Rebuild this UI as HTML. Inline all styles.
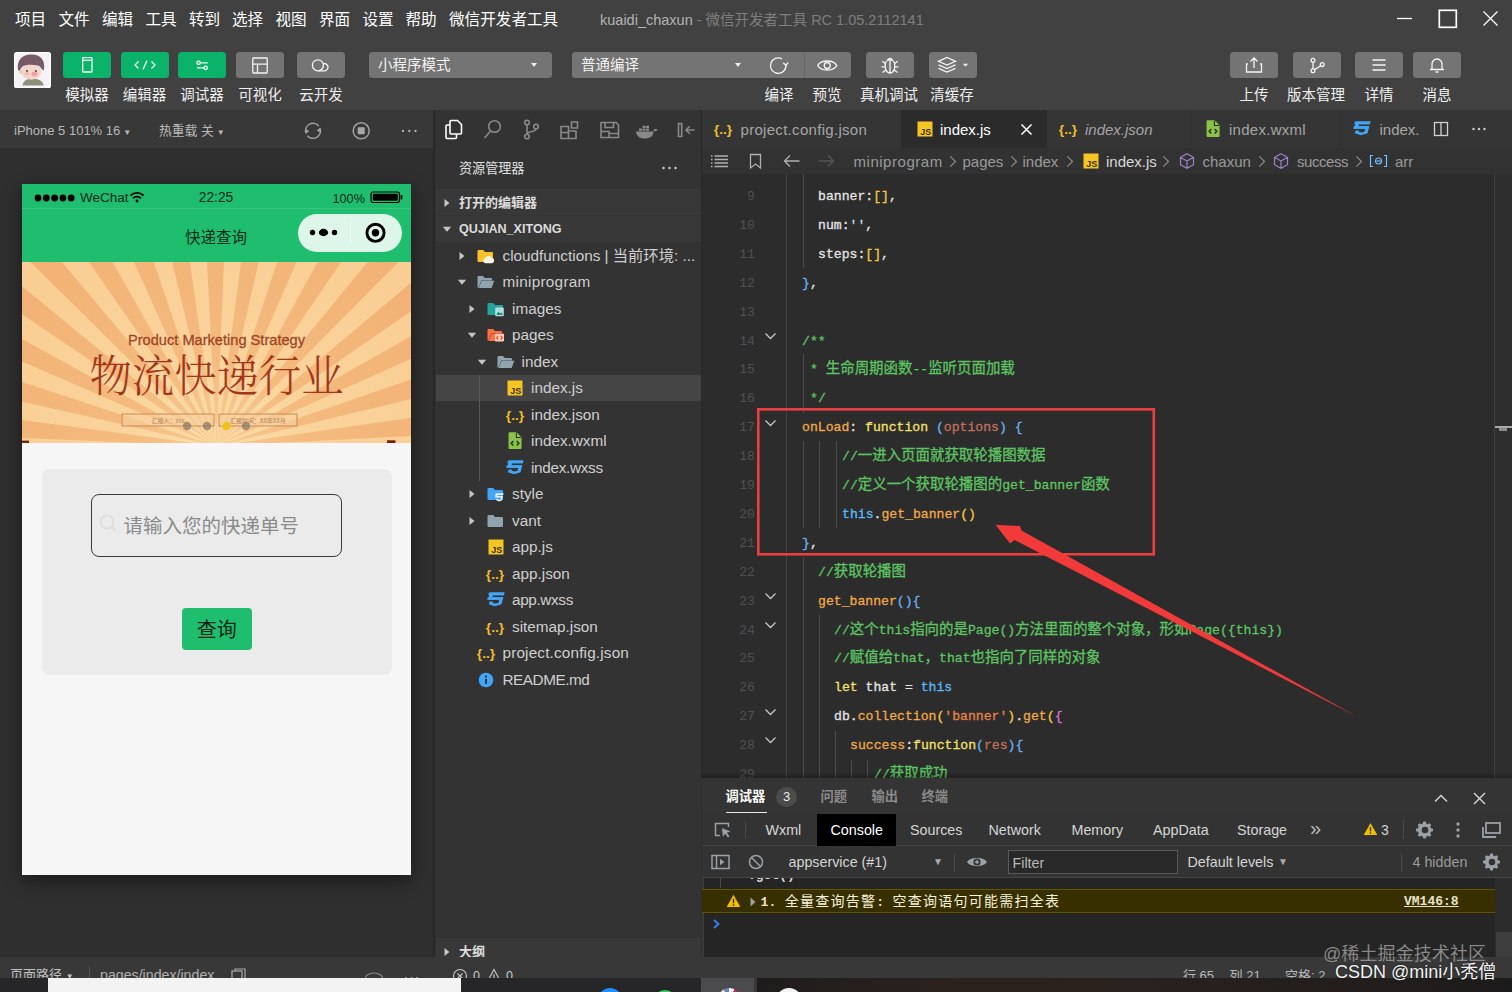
<!DOCTYPE html>
<html lang="zh">
<head>
<meta charset="utf-8">
<title>微信开发者工具</title>
<style>
*{box-sizing:border-box;margin:0;padding:0}
html,body{width:1512px;height:992px;overflow:hidden;background:#2e2e2e}
body{position:relative;font-family:"Liberation Sans","Noto Sans CJK SC",sans-serif;color:#e8e8e8;-webkit-font-smoothing:antialiased}
.abs{position:absolute}
/* ---------- title / menu ---------- */
#menubar{position:absolute;left:0;top:0;width:1512px;height:38px;background:#414141}
#menubar .mi{position:absolute;top:9.500px;font-size:15.600px;line-height:20px;color:#fff;white-space:nowrap}
#title{position:absolute;left:600px;top:10px;font-size:14.500px;line-height:20px;white-space:nowrap;color:#7e7e7e}
#title b{font-weight:normal;color:#b4b4b4}
/* ---------- toolbar ---------- */
#toolbar{position:absolute;left:0;top:38px;width:1512px;height:72px;background:#414141}
.tb{position:absolute;top:14px;height:26px;width:48px;border-radius:3.500px;background:#747474}.tb svg{opacity:.92}
.tb.g{background:#0bb36a}
.tl{position:absolute;top:46.800px;font-size:14.5px;line-height:20px;color:#f0f0f0;white-space:nowrap;text-align:center}
.sel{position:absolute;top:14px;height:26px;border-radius:3.500px;background:#747474;color:#f2f2f2;font-size:14.500px;line-height:27.500px;padding-left:9px}
/* ---------- simulator ---------- */
#sim{position:absolute;left:0;top:110px;width:433px;height:868px;background:#2f2f2f}
#simbar{position:absolute;left:0;top:0;width:433px;height:38px;background:#383838}
#divider1{position:absolute;left:433px;top:110px;width:2px;height:868px;background:#292929}
#phone{position:absolute;left:22px;top:73.5px;width:389px;height:691px;overflow:hidden;box-shadow:0 6px 18px rgba(0,0,0,.45)}
/* ---------- explorer ---------- */
#exp{position:absolute;left:436px;top:110px;width:265px;box-shadow:-1px 0 0 #313131;height:868px;background:#333333}
.sech{font-size:13px;line-height:20px;font-weight:bold;color:#dcdcdc;white-space:nowrap}
.trow{font-size:15.300px;line-height:22px;color:#cfcfcf;white-space:nowrap}
/* ---------- editor ---------- */
#ed{position:absolute;left:702px;top:110px;width:810px;height:668px;background:#2c2c2c;box-shadow:-1px 0 0 #282828}
.tabt{font-size:15px;line-height:22px;margin-top:1px;color:#a6a6a6;white-space:nowrap}
.bct{font-size:15px;line-height:22px;margin-top:1px;color:#9a9a9a;white-space:nowrap}
.ln{position:absolute;left:0;width:53px;text-align:right;font-family:"Liberation Mono","Noto Sans CJK SC",monospace;font-size:13.130px;line-height:29px;color:#505050}
.cl{position:absolute;font-family:"Liberation Mono","Noto Sans CJK SC",monospace;font-size:13.130px;line-height:29px;white-space:pre;color:#e6e6e6}
.cl{-webkit-text-stroke:.300px currentColor}.cl i{font-style:normal}.cl .k{font-weight:normal;font-size:14.450px}
.cl .w{color:#e4e4e4}.cl .y{color:#f5c842}.cl .b{color:#6ab0f3}.cl .c{color:#5dc462}.cl .o{color:#f0a848}.cl .f{color:#f3e16b}.cl .p{color:#c0705f}.cl .t{color:#5cb8f5}.cl .s{color:#cfd8e6}.cl .s2{color:#e8834a}.cl .m{color:#da70d6}
/* ---------- debugger ---------- */
#dbg{position:absolute;left:702px;top:778px;width:810px;height:180px;background:#343434}
.wk{font-size:14px;letter-spacing:1.250px;font-weight:normal;color:#f6f1dc}
/* ---------- status ---------- */
#status{position:absolute;left:0;top:957px;width:1512px;height:22px;background:#383838;overflow:hidden}
#taskbar{position:absolute;left:0;top:977.500px;width:1512px;height:14.500px;background:#262628;overflow:hidden}
</style>
</head>
<body>
<div id="menubar"><span class="mi" style="left:15px">项目</span><span class="mi" style="left:58.5px">文件</span><span class="mi" style="left:102px">编辑</span><span class="mi" style="left:145.5px">工具</span><span class="mi" style="left:189px">转到</span><span class="mi" style="left:232px">选择</span><span class="mi" style="left:275.5px">视图</span><span class="mi" style="left:319px">界面</span><span class="mi" style="left:362.5px">设置</span><span class="mi" style="left:405.5px">帮助</span><span class="mi" style="left:449px">微信开发者工具</span><div id="title"><b>kuaidi_chaxun</b> - 微信开发者工具 RC 1.05.2112141</div><svg class="abs" style="left:1390px;top:0" width="122" height="38" viewBox="0 0 122 38" fill="none" stroke="#fff" stroke-width="1.300">
<path d="M7 18.500H22"/><rect x="49.300" y="10.300" width="17" height="17" stroke-width="1.700"/><path d="M93.5 11.5L107.5 25.5M107.5 11.5L93.5 25.5"/></svg></div>
<div id="toolbar"><svg class="abs" style="left:14px;top:13.800px" width="37" height="36.500" viewBox="0 0 37 36.500"><defs><filter id="avb" x="-20%" y="-20%" width="140%" height="140%"><feGaussianBlur stdDeviation=".700"/></filter><clipPath id="avc"><rect width="37" height="36.500" rx="3.200"/></clipPath></defs><rect width="37" height="36.500" rx="3.200" fill="#f5f3f5"/><g clip-path="url(#avc)" filter="url(#avb)"><path d="M8.500 33.500C9 29 13 26.500 18.500 26.500S28.500 28.500 29.800 33.500Z" fill="#8f907a"/><ellipse cx="17.300" cy="19.500" rx="10.200" ry="8.200" fill="#f2d8cc"/><ellipse cx="6.800" cy="19.800" rx="1.600" ry="2.200" fill="#efc9a8"/><path d="M4 17.500C2.500 9 8 2.500 16.500 2.500C26 2 31.500 8 30 17.500C28.500 20 27.500 14.500 24 13.500C18 12 11 12.500 8.500 14.500C6.500 16 5.500 21 4 17.500Z" fill="#775a68"/><ellipse cx="12.800" cy="21.800" rx="2.600" ry="2" fill="#f3b4b4" opacity=".8"/><ellipse cx="20.500" cy="22" rx="3" ry="2.400" fill="#f29c9c" opacity=".9"/><circle cx="13" cy="19" r=".900" fill="#4a2c2c"/><circle cx="22" cy="19" r=".900" fill="#4a2c2c"/></g><rect x=".600" y=".600" width="35.800" height="35.300" rx="2.800" fill="none" stroke="#fff" stroke-width="1.200"/></svg><div class="tb g" style="left:63px"><svg width="48" height="26" viewBox="0 0 48 26" fill="none" stroke="#fff" stroke-width="1.3"><rect x="19.700" y="5.700" width="9.300" height="14.300" rx=".600"/><path d="M19.700 8.300H29"/></svg></div><div class="tb g" style="left:120.5px"><svg width="48" height="26" viewBox="0 0 48 26" fill="none" stroke="#fff" stroke-width="1.3"><path d="M17.5 9.5L14 13L17.5 16.5M30.5 9.5L34 13L30.5 16.5M26 8.5L22 17.5"/></svg></div><div class="tb g" style="left:178px"><svg width="48" height="26" viewBox="0 0 48 26" fill="none" stroke="#fff" stroke-width="1.3"><path d="M22.300 10.800H29.800M19 15.800H26"/><circle cx="20.600" cy="10.800" r="1.700"/><circle cx="27.700" cy="15.800" r="1.700"/></svg></div><div class="tb " style="left:236px"><svg width="48" height="26" viewBox="0 0 48 26" fill="none" stroke="#fff" stroke-width="1.3"><rect x="16.800" y="6" width="14.400" height="15" rx=".800"/><path d="M16.800 12.200H31.200M21.500 12.200V21"/></svg></div><div class="tb " style="left:297px"><svg width="48" height="26" viewBox="0 0 48 26" fill="none" stroke="#fff" stroke-width="1.3"><circle cx="20.900" cy="13.300" r="5.500"/><path d="M25.800 11.800a3.700 3.700 0 1 1 2.300 7H21"/></svg></div><div class="tl" style="left:47px;width:80px">模拟器</div><div class="tl" style="left:104.5px;width:80px">编辑器</div><div class="tl" style="left:162px;width:80px">调试器</div><div class="tl" style="left:220px;width:80px">可视化</div><div class="tl" style="left:281px;width:80px">云开发</div><div class="sel" style="left:369px;width:183px">小程序模式<i class="abs" style="right:15px;top:11px;border:3.5px solid transparent;border-top:4.5px solid #eee"></i></div><div class="sel" style="left:572px;width:183.500px;border-radius:3.500px 0 0 3.500px">普通编译<i class="abs" style="right:15px;top:11px;border:3.500px solid transparent;border-top:4.500px solid #eee"></i></div><div class="tb" style="left:756px;width:95px;border-radius:0 3.500px 3.500px 0"><svg class="abs" style="left:0" width="48" height="26" viewBox="0 0 48 26" fill="none" stroke="#fff" stroke-width="1.3"><path d="M26 6.900A7.700 7.700 0 1 0 29.900 13"/><path d="M27.200 10.800L29.900 13.300L32.200 10.500"/></svg><svg class="abs" style="left:48px" width="48" height="26" viewBox="0 0 48 26" fill="none" stroke="#fff" stroke-width="1.3"><path d="M13.700 13.500C17 7.500 29.500 7.500 32.800 13.500C29.500 19.500 17 19.500 13.700 13.500Z"/><circle cx="23.200" cy="13.500" r="3"/></svg><i class="abs" style="left:47.5px;top:0;width:1px;height:26px;background:#666"></i></div><div class="tb " style="left:866px"><svg width="48" height="26" viewBox="0 0 48 26" fill="none" stroke="#fff" stroke-width="1.3"><path d="M19.300 15a4.700 6 0 0 0 9.400 0V12.500a4.700 4.700 0 0 0-9.400 0ZM24 8V21M21.600 8.300a2.500 2.500 0 0 1 4.800 0M19.300 11.500L16.300 9.300M28.700 11.500L31.700 9.300M19.300 14.800H15.500M28.700 14.800H32.500M19.800 18L16.500 20.500M28.200 18L31.500 20.500"/></svg></div><div class="tb " style="left:928.5px"><svg width="48" height="26" viewBox="0 0 48 26" fill="none" stroke="#fff" stroke-width="1.3"><path d="M18 5.500L26.500 9.300L18 13.100L9.500 9.300ZM9.500 12.800L18 16.600L26.500 12.800M9.500 16.300L18 20.100L26.500 16.300"/><path d="M33.800 11.800H39.200L36.500 14.600Z" fill="#fff" stroke="none"/></svg></div><div class="tl" style="left:739px;width:80px">编译</div><div class="tl" style="left:787px;width:80px">预览</div><div class="tl" style="left:849px;width:80px">真机调试</div><div class="tl" style="left:912px;width:80px">清缓存</div><div class="tb " style="left:1230px"><svg width="48" height="26" viewBox="0 0 48 26" fill="none" stroke="#fff" stroke-width="1.3"><path d="M18 12H16.5V20H31.5V12H30M24 16V6M20.5 9.5L24 6L27.5 9.5"/></svg></div><div class="tb " style="left:1292.5px"><svg width="48" height="26" viewBox="0 0 48 26" fill="none" stroke="#fff" stroke-width="1.3"><circle cx="20" cy="8.300" r="1.900"/><circle cx="20" cy="18.800" r="1.900"/><circle cx="29.200" cy="12.600" r="1.900"/><path d="M20 10.200V16.900M21.500 17.600L27.700 13.700"/></svg></div><div class="tb " style="left:1355px"><svg width="48" height="26" viewBox="0 0 48 26" fill="none" stroke="#fff" stroke-width="1.3"><path d="M17.5 8H30.5M17.5 13H30.5M17.5 18H30.5" stroke-width="1.6"/></svg></div><div class="tb " style="left:1412.5px"><svg width="48" height="26" viewBox="0 0 48 26" fill="none" stroke="#fff" stroke-width="1.3"><path d="M19 17.5V12a5 5 0 0 1 10 0V17.5M17 17.5H31M22.5 20H25.5"/></svg></div><div class="tl" style="left:1214px;width:80px">上传</div><div class="tl" style="left:1276px;width:80px">版本管理</div><div class="tl" style="left:1339px;width:80px">详情</div><div class="tl" style="left:1397px;width:80px">消息</div></div>
<div id="sim"><div id="simbar"><span class="abs" style="left:14px;top:11px;font-size:13px;line-height:20px;color:#b8b8b8;white-space:nowrap">iPhone 5 101% 16<i style="font-style:normal;font-size:8px;margin-left:3px">▼</i></span><span class="abs" style="left:159px;top:11px;font-size:12.800px;line-height:20px;color:#b8b8b8;white-space:nowrap">热重载 关<i style="font-style:normal;font-size:8px;margin-left:3px">▼</i></span><svg class="abs" style="left:303px;top:10px" width="120" height="22" viewBox="0 0 120 22" fill="none" stroke="#a2a2a2" stroke-width="1.400"><path d="M3 13.500A7.500 7.500 0 0 1 15.800 6M17 8.100A7.500 7.500 0 0 1 4.200 15.600"/><path d="M3.200 9.200L3 13.500L6.300 11.200Z M16.800 12.400L17 8.100L13.700 10.400Z" fill="#a2a2a2" stroke="none"/><circle cx="58.200" cy="10.800" r="8" stroke-width="1.500"/><rect x="54.700" y="7.300" width="7" height="7" rx=".800" fill="#a8a8a8" stroke="none"/><g fill="#b4b4b4" stroke="none"><circle cx="100" cy="11" r="1.150"/><circle cx="106.300" cy="11" r="1.150"/><circle cx="112.500" cy="11" r="1.150"/></g></svg></div><div id="phone">
<div class="abs" style="left:0;top:0;width:389px;height:78px;background:#1ebe6e"></div>
<div class="abs" style="left:0;top:24.5px;width:389px;height:1px;background:rgba(255,255,255,.13)"></div>
<svg class="abs" style="left:11px;top:9px" width="46" height="10" viewBox="0 0 46 10"><circle cx="5" cy="5" r="3.4"/><circle cx="13.3" cy="5" r="3.4"/><circle cx="21.6" cy="5" r="3.4"/><circle cx="29.9" cy="5" r="3.4"/><circle cx="38.2" cy="5" r="3.4"/></svg>
<span class="abs" style="left:58px;top:5.500px;font-size:13.500px;line-height:18px;color:#0a2a18">WeChat</span>
<svg class="abs" style="left:107px;top:7px" width="16" height="12" viewBox="0 0 16 12" fill="none" stroke="#000" stroke-width="1.8"><path d="M1.5 4.5a9.5 9.5 0 0 1 13 0M4 7.3a5.8 5.8 0 0 1 8 0"/><circle cx="8" cy="10" r="1.4" fill="#000" stroke="none"/></svg>
<span class="abs" style="left:154px;width:80px;text-align:center;top:5.500px;font-size:13.800px;line-height:18px;color:#0a2a18">22:25</span>
<span class="abs" style="left:310.500px;top:6px;font-size:12.700px;line-height:18px;color:#0a2a18">100%</span>
<svg class="abs" style="left:348px;top:7px" width="34" height="13" viewBox="0 0 34 13"><rect x="1" y="1" width="28.5" height="10.5" rx="2.2" fill="none" stroke="#000" stroke-width="1.2"/><rect x="2.8" y="2.8" width="25" height="7" rx="1" fill="#000"/><rect x="30.6" y="4" width="1.8" height="4.5" rx=".8" fill="#000"/></svg>
<span class="abs" style="left:134px;width:120px;text-align:center;top:43px;font-size:15.5px;line-height:22px;color:#0c2c1a">快递查询</span>
<div class="abs" style="left:276px;top:30px;width:104px;height:38px;border-radius:19px;background:#def6ea"></div>
<div class="abs" style="left:327.5px;top:38px;width:1px;height:22px;background:#f4fbf7"></div>
<svg class="abs" style="left:276px;top:30px" width="104" height="38" viewBox="0 0 104 38"><circle cx="14.500" cy="18.500" r="2.700"/><ellipse cx="25.500" cy="18.500" rx="4.600" ry="3.700"/><circle cx="36.500" cy="18.500" r="2.700"/><circle cx="77.500" cy="18.800" r="8.600" fill="none" stroke="#000" stroke-width="2.900"/><circle cx="77.500" cy="18.800" r="3.700"/></svg>
<svg class="abs" style="left:0;top:78px" width="389" height="181" viewBox="0 0 389 181"><defs><radialGradient id="rg" cx="194.5" cy="182" r="260" gradientUnits="userSpaceOnUse"><stop offset="0" stop-color="#fbdcaa"/><stop offset=".4" stop-color="#fad39b"/><stop offset="1" stop-color="#f9cd93"/></radialGradient><radialGradient id="rg2" cx="194.5" cy="182" r="260" gradientUnits="userSpaceOnUse"><stop offset="0" stop-color="#f8cc94"/><stop offset=".35" stop-color="#f4ba7e"/><stop offset="1" stop-color="#f2b174"/></radialGradient></defs><rect width="389" height="181" fill="url(#rg)"/><g fill="url(#rg2)"><path d="M194.5 184L-300.3 255.8L-304.8 209.9Z"/><path d="M194.5 184L-305.1 163.7L-301.1 117.7Z"/><path d="M194.5 184L-292.8 72.2L-280.5 27.7Z"/><path d="M194.5 184L-264.0 -15.4L-243.7 -56.9Z"/><path d="M194.5 184L-219.6 -96.3L-191.9 -133.3Z"/><path d="M194.5 184L-161.0 -167.6L-127.1 -198.9Z"/><path d="M194.5 184L-90.4 -226.9L-51.2 -251.5Z"/><path d="M194.5 184L-10.0 -272.3L33.0 -289.2Z"/><path d="M194.5 184L77.3 -302.1L122.7 -310.8Z"/><path d="M194.5 184L168.6 -315.3L214.8 -315.6Z"/><path d="M194.5 184L260.8 -311.6L306.3 -303.3Z"/><path d="M194.5 184L350.8 -291.0L393.9 -274.5Z"/><path d="M194.5 184L435.4 -254.2L474.8 -230.1Z"/><path d="M194.5 184L511.8 -202.4L546.1 -171.5Z"/><path d="M194.5 184L577.4 -137.6L605.4 -100.9Z"/><path d="M194.5 184L630.0 -61.7L650.8 -20.5Z"/><path d="M194.5 184L667.7 22.5L680.6 66.8Z"/><path d="M194.5 184L689.3 112.2L693.8 158.1Z"/><path d="M194.5 184L694.1 204.3L690.1 250.3Z"/></g>
<rect x="0" y="178.600" width="7" height="2.400" fill="#7a1f0a"/><rect x="365" y="178.300" width="8.500" height="2.700" fill="#7a1f0a"/>
<rect x="100" y="152" width="92" height="12" fill="#f6cf9c" fill-opacity=".6" stroke="#c98a55" stroke-width="1"/><rect x="197" y="152" width="78" height="12" fill="#f6cf9c" fill-opacity=".6" stroke="#c98a55" stroke-width="1"/>
<text x="146" y="161.300" text-anchor="middle" font-family="Noto Sans CJK SC, sans-serif" font-size="6" fill="#b9825a">汇报人：xxx</text><text x="236" y="161.300" text-anchor="middle" font-family="Noto Sans CJK SC, sans-serif" font-size="6" fill="#b9825a">汇报时间：XX年XX月</text><text x="194.5" y="83" text-anchor="middle" font-family="Liberation Sans, sans-serif" font-size="15.500" fill="#9f4526" stroke="#9f4526" stroke-width=".300" textLength="177" lengthAdjust="spacingAndGlyphs">Product Marketing Strategy</text>
<text x="194.5" y="130" text-anchor="middle" font-family="Noto Serif CJK SC, serif" font-weight="300" font-size="44" fill="#a2361a" textLength="254" lengthAdjust="spacingAndGlyphs">物流快递行业</text>
<g fill="#8a7a62" fill-opacity=".75"><circle cx="165" cy="164" r="4.2"/><circle cx="185" cy="164" r="4.2"/><circle cx="224" cy="164" r="4.2"/></g><circle cx="204.5" cy="164" r="4.2" fill="#f3c21a"/>
</svg>
<div class="abs" style="left:0;top:259px;width:389px;height:432px;background:#f6f6f6"></div>
<div class="abs" style="left:20px;top:285px;width:350px;height:206px;border-radius:8px;background:#ebebeb"></div>
<div class="abs" style="left:69px;top:310px;width:251px;height:63px;border-radius:8px;border:1.5px solid #3a3a3a"></div>
<svg class="abs" style="left:75px;top:328px" width="24" height="24" viewBox="0 0 24 24" fill="none" stroke="#dcdcdc" stroke-width="1.6"><circle cx="10" cy="10" r="6.5"/><path d="M15 15L19 19"/></svg>
<span class="abs" style="left:101.5px;top:328px;font-size:19.5px;line-height:28px;color:#8a8a8a;white-space:nowrap">请输入您的快递单号</span>
<div class="abs" style="left:160px;top:424.200px;width:69.500px;height:42px;border-radius:4px;background:#1ebe6e;color:#0c2416;font-size:20px;line-height:45px;text-align:center">查询</div>
</div></div>
<div id="divider1"></div>
<div id="exp"><svg class="abs" style="left:0;top:4px" width="265" height="32" viewBox="0 0 265 32" fill="none" stroke="#898989" stroke-width="1.600">
<g stroke="#ffffff" stroke-width="1.600"><path d="M14 7.500a1 1 0 0 1 1-1H21.500L25.500 10.500V19a1 1 0 0 1-1 1H15a1 1 0 0 1-1-1Z"/><path d="M14 11H11a1 1 0 0 0-1 1V23.500a1 1 0 0 0 1 1H19.500a1 1 0 0 0 1-1V20"/></g>
<circle cx="58.500" cy="12.500" r="5.800"/><path d="M54.500 17L48.500 24"/>
<circle cx="91" cy="8.500" r="2.300"/><circle cx="91" cy="22.500" r="2.300"/><circle cx="100" cy="12.500" r="2.300"/><path d="M91 10.800V20.200M100 14.800C100 18.500 91 17 91 20.200"/>
<path d="M125 12.500H132.500V24.500H125ZM132.500 17H140V24.500H132.500M125 18.500H132.500M135.500 8H141.500V14H135.500Z"/>
<path d="M165 8.500H180L182.500 11V23.500H165ZM169 8.500V13.500H177.500V8.500M165 17.500H173V23.500M173 19.500H182.500"/>
<path d="M200 17.500H217.500C217.500 22 214 24.500 208.500 24.500C203.500 24.500 200.500 22 200 17.500ZM217.500 17.500C220 17.500 221 16.500 221.500 15.500C220.500 14.800 219 15 218 15.500" fill="#898989" stroke="none"/><path d="M203 16.800V14.500H206V16.800M206.500 16.800V14.500H209.500V16.800M210 16.800V14.500H213V16.800M206.500 14V11.700H209.500V14M210 14V11.700H213V14" fill="#898989" stroke="none"/>
<path d="M242.500 9.500H245.700V22.500H242.500ZM258.500 16H250M253.800 12.200L250 16L253.800 19.800"/>
</svg><span class="abs" style="left:23px;top:49px;font-size:13.100px;line-height:20px;color:#e0e0e0;white-space:nowrap">资源管理器</span><svg class="abs" style="left:224px;top:54px" width="20" height="8" viewBox="0 0 20 8" fill="#ccc"><circle cx="3.500" cy="4" r="1.200"/><circle cx="9.500" cy="4" r="1.200"/><circle cx="15.500" cy="4" r="1.200"/></svg><div class="abs" style="left:0;top:78.500px;width:265px;height:53.500px;background:#383838"></div><div class="abs" style="left:0;top:105px;width:265px;height:1px;background:#353535"></div><svg class="abs" style="left:6px;top:87.5px" width="10" height="10" viewBox="0 0 10 10"><path d="M2.5 1L7.5 5L2.5 9Z" fill="#c5c5c5"/></svg><span class="abs sech" style="left:23px;top:82.500px">打开的编辑器</span><svg class="abs" style="left:6px;top:114px" width="10" height="10" viewBox="0 0 10 10"><path d="M0.800 2.800H9.200L5 7.800Z" fill="#c5c5c5"/></svg><span class="abs sech" style="left:23px;top:109px;font-size:12.600px">QUJIAN_XITONG</span><svg class="abs" style="left:21px;top:140.5px" width="10" height="10" viewBox="0 0 10 10"><path d="M2.5 1L7.5 5L2.5 9Z" fill="#c5c5c5"/></svg><div class="abs" style="left:40px;top:136.5px;width:20px;height:18px"><svg width="19" height="18" viewBox="0 0 19 18"><path d="M1.5 4a1 1 0 0 1 1-1H7.2l1.8 2H16a1 1 0 0 1 1 1V14a1 1 0 0 1-1 1H2.5a1 1 0 0 1-1-1Z" fill="#fbc02d"/><path d="M9.2 16.2a2.6 2.6 0 0 1 .3-5.1 3.3 3.3 0 0 1 6.200-.4 2.800 2.800 0 0 1 .3 5.500Z" fill="#fff7e0"/></svg></div><span class="abs trow" style="left:66.5px;top:134.5px">cloudfunctions | 当前环境: ...</span><svg class="abs" style="left:21px;top:167.0px" width="10" height="10" viewBox="0 0 10 10"><path d="M0.800 2.800H9.200L5 7.800Z" fill="#c5c5c5"/></svg><div class="abs" style="left:40px;top:163.0px;width:20px;height:18px"><svg width="19" height="18" viewBox="0 0 19 18"><path d="M1.5 14.5V4a1 1 0 0 1 1-1H7l1.8 2H15a1 1 0 0 1 1 1v1.5H5.2L2.6 14.5Z" fill="#90a4ae"/><path d="M2.6 15L5.6 7.8H18.4L15.6 15Z" fill="#90a4ae"/></svg></div><span class="abs trow" style="left:66.5px;top:161.0px;letter-spacing:.280px">miniprogram</span><svg class="abs" style="left:31px;top:193.5px" width="10" height="10" viewBox="0 0 10 10"><path d="M2.5 1L7.5 5L2.5 9Z" fill="#c5c5c5"/></svg><div class="abs" style="left:50px;top:189.5px;width:20px;height:18px"><svg width="19" height="18" viewBox="0 0 19 18"><path d="M1.5 4a1 1 0 0 1 1-1H7.2l1.8 2H16a1 1 0 0 1 1 1V14a1 1 0 0 1-1 1H2.5a1 1 0 0 1-1-1Z" fill="#26a69a"/><rect x="9.2" y="7.6" width="8.6" height="8.6" rx="1" fill="#b2dfdb"/><path d="M10.300 14.800l2.200-3 1.600 2 1.100-1.300 1.700 2.300Z" fill="#00796b"/></svg></div><span class="abs trow" style="left:76px;top:187.5px">images</span><svg class="abs" style="left:31px;top:220.0px" width="10" height="10" viewBox="0 0 10 10"><path d="M0.800 2.800H9.200L5 7.800Z" fill="#c5c5c5"/></svg><div class="abs" style="left:50px;top:216.0px;width:20px;height:18px"><svg width="19" height="18" viewBox="0 0 19 18"><path d="M1.5 14.5V4a1 1 0 0 1 1-1H7l1.8 2H15a1 1 0 0 1 1 1v1.5H5.2L2.6 14.5Z" fill="#ff7043"/><path d="M2.6 15L5.6 7.8H18.4L15.6 15Z" fill="#ff7043"/><rect x="9" y="7.800" width="9" height="7.800" rx="1" fill="#ffccbc"/><path d="M12.200 9.800L10.600 11.700L12.200 13.600M14.800 9.800L16.400 11.700L14.800 13.600" fill="none" stroke="#e64a19" stroke-width="1.100"/></svg></div><span class="abs trow" style="left:76px;top:214.0px">pages</span><svg class="abs" style="left:40.5px;top:246.5px" width="10" height="10" viewBox="0 0 10 10"><path d="M0.800 2.800H9.200L5 7.800Z" fill="#c5c5c5"/></svg><div class="abs" style="left:60px;top:242.5px;width:20px;height:18px"><svg width="19" height="18" viewBox="0 0 19 18"><path d="M1.5 14.5V4a1 1 0 0 1 1-1H7l1.8 2H15a1 1 0 0 1 1 1v1.5H5.2L2.6 14.5Z" fill="#90a4ae"/><path d="M2.6 15L5.6 7.8H18.4L15.6 15Z" fill="#90a4ae"/></svg></div><span class="abs trow" style="left:85.5px;top:240.5px">index</span><div class="abs" style="left:0;top:264.75px;width:265px;height:26.500px;background:#454545"></div><div class="abs" style="left:69.5px;top:269.0px;width:20px;height:18px"><svg width="18" height="18" viewBox="0 0 18 18"><rect x="1.5" y="1.5" width="15" height="15" fill="#f5c623"/><text x="15.2" y="14.6" text-anchor="end" font-family="Liberation Sans, sans-serif" font-weight="bold" font-size="9" fill="#3a3000">JS</text></svg></div><span class="abs trow" style="left:95px;top:267.0px">index.js</span><div class="abs" style="left:68.5px;top:295.5px;width:20px;height:18px"><svg width="20" height="18" viewBox="0 0 20 18"><text x="10" y="13.5" text-anchor="middle" font-family="Liberation Sans, sans-serif" font-weight="bold" font-size="13.5" fill="#f2bd2c" textLength="18.5" lengthAdjust="spacingAndGlyphs">{..}</text></svg></div><span class="abs trow" style="left:95px;top:293.5px">index.json</span><div class="abs" style="left:69.5px;top:322.0px;width:20px;height:18px"><svg width="18" height="18" viewBox="1.300 1.200 15.600 15.600"><path d="M3.5 2.5a1 1 0 0 1 1-1H10.5L14.8 5.8V15a1 1 0 0 1-1 1H4.5a1 1 0 0 1-1-1Z" fill="#8bc34a"/><path d="M10.3 1.7V6H14.6" fill="none" stroke="#2b2b2b" stroke-width=".9"/><path d="M7.6 9L5.8 10.9L7.6 12.8M10.6 9L12.4 10.9L10.6 12.8" fill="none" stroke="#22380f" stroke-width="1.3"/></svg></div><span class="abs trow" style="left:95px;top:320.0px">index.wxml</span><div class="abs" style="left:69.5px;top:348.5px;width:20px;height:18px"><svg width="18" height="18" viewBox="2.800 .800 13.600 17.300" preserveAspectRatio="none"><path d="M4.3 2.2H16l-.5 2.6H7.3l-.3 1.9h8.1l-1.3 6.9-5 1.9-4.6-1.9.5-2.7h2.6l-.2 1.1 2.1.8 2.3-.8.5-2.8H3.7l.9-4.7h8.200" fill="#42a5f5"/><path d="M4.3 2.2H16l-.5 2.6H3.8Z M3.4 6.7H15.1L14.6 9.3H2.9Z" fill="#42a5f5"/></svg></div><span class="abs trow" style="left:95px;top:346.5px;letter-spacing:-.300px">index.wxss</span><svg class="abs" style="left:31px;top:379.0px" width="10" height="10" viewBox="0 0 10 10"><path d="M2.5 1L7.5 5L2.5 9Z" fill="#c5c5c5"/></svg><div class="abs" style="left:50px;top:375.0px;width:20px;height:18px"><svg width="19" height="18" viewBox="0 0 19 18"><path d="M1.5 4a1 1 0 0 1 1-1H7.2l1.8 2H16a1 1 0 0 1 1 1V14a1 1 0 0 1-1 1H2.5a1 1 0 0 1-1-1Z" fill="#42a5f5"/><path d="M9.6 8.200H17.600L17.300 9.900H11.600L11.400 11H17L16.100 15.300L13.200 16.500L10.200 15.300L10.500 13.800H12L11.900 14.400L13.200 14.900L14.700 14.400L15 12.600H9Z" fill="#e3f2fd"/></svg></div><span class="abs trow" style="left:76px;top:373.0px">style</span><svg class="abs" style="left:31px;top:405.5px" width="10" height="10" viewBox="0 0 10 10"><path d="M2.5 1L7.5 5L2.5 9Z" fill="#c5c5c5"/></svg><div class="abs" style="left:50px;top:401.5px;width:20px;height:18px"><svg width="19" height="18" viewBox="0 0 19 18"><path d="M1.5 4a1 1 0 0 1 1-1H7.2l1.8 2H16a1 1 0 0 1 1 1V14a1 1 0 0 1-1 1H2.5a1 1 0 0 1-1-1Z" fill="#90a4ae"/></svg></div><span class="abs trow" style="left:76px;top:399.5px">vant</span><div class="abs" style="left:50.5px;top:428.0px;width:20px;height:18px"><svg width="18" height="18" viewBox="0 0 18 18"><rect x="1.5" y="1.5" width="15" height="15" fill="#f5c623"/><text x="15.2" y="14.6" text-anchor="end" font-family="Liberation Sans, sans-serif" font-weight="bold" font-size="9" fill="#3a3000">JS</text></svg></div><span class="abs trow" style="left:76px;top:426.0px">app.js</span><div class="abs" style="left:49px;top:454.5px;width:20px;height:18px"><svg width="20" height="18" viewBox="0 0 20 18"><text x="10" y="13.5" text-anchor="middle" font-family="Liberation Sans, sans-serif" font-weight="bold" font-size="13.5" fill="#f2bd2c" textLength="18.5" lengthAdjust="spacingAndGlyphs">{..}</text></svg></div><span class="abs trow" style="left:76px;top:452.5px">app.json</span><div class="abs" style="left:50.5px;top:481.0px;width:20px;height:18px"><svg width="18" height="18" viewBox="2.800 .800 13.600 17.300" preserveAspectRatio="none"><path d="M4.3 2.2H16l-.5 2.6H7.3l-.3 1.9h8.1l-1.3 6.9-5 1.9-4.6-1.9.5-2.7h2.6l-.2 1.1 2.1.8 2.3-.8.5-2.8H3.7l.9-4.7h8.200" fill="#42a5f5"/><path d="M4.3 2.2H16l-.5 2.6H3.8Z M3.4 6.7H15.1L14.6 9.3H2.9Z" fill="#42a5f5"/></svg></div><span class="abs trow" style="left:76px;top:479.0px;letter-spacing:-.350px">app.wxss</span><div class="abs" style="left:49px;top:507.5px;width:20px;height:18px"><svg width="20" height="18" viewBox="0 0 20 18"><text x="10" y="13.5" text-anchor="middle" font-family="Liberation Sans, sans-serif" font-weight="bold" font-size="13.5" fill="#f2bd2c" textLength="18.5" lengthAdjust="spacingAndGlyphs">{..}</text></svg></div><span class="abs trow" style="left:76px;top:505.5px">sitemap.json</span><div class="abs" style="left:39.5px;top:534.0px;width:20px;height:18px"><svg width="20" height="18" viewBox="0 0 20 18"><text x="10" y="13.5" text-anchor="middle" font-family="Liberation Sans, sans-serif" font-weight="bold" font-size="13.5" fill="#f2bd2c" textLength="18.5" lengthAdjust="spacingAndGlyphs">{..}</text></svg></div><span class="abs trow" style="left:66.5px;top:532.0px;letter-spacing:.170px">project.config.json</span><div class="abs" style="left:40.5px;top:560.5px;width:20px;height:18px"><svg width="18" height="18" viewBox="0 0 18 18"><circle cx="9" cy="9" r="7.3" fill="#42a5f5"/><rect x="8.1" y="7.8" width="1.8" height="5" fill="#1e2a35"/><circle cx="9" cy="5.6" r="1.1" fill="#1e2a35"/></svg></div><span class="abs trow" style="left:66.5px;top:558.5px;letter-spacing:-.450px">README.md</span><div class="abs" style="left:42.5px;top:265px;width:1px;height:106px;background:#585858"></div><div class="abs" style="left:0;top:828px;width:265px;height:40px;background:#383838"></div><svg class="abs" style="left:6px;top:836.5px" width="10" height="10" viewBox="0 0 10 10"><path d="M2.5 1L7.5 5L2.5 9Z" fill="#c5c5c5"/></svg><span class="abs sech" style="left:23px;top:831.5px">大纲</span></div>
<div id="ed"><div class="abs" style="left:0;top:0;width:810px;height:37.500px;background:#353535"></div><div class="abs" style="left:199px;top:0;width:145.500px;height:37.500px;background:#2b2b2b"></div><div class="abs" style="left:487.5px;top:0;width:1px;height:37.500px;background:#2f2f2f"></div><div class="abs" style="left:637.5px;top:0;width:1px;height:37.500px;background:#2f2f2f"></div><div class="abs" style="left:11px;top:10px;width:20px;height:18px"><svg width="20" height="18" viewBox="0 0 20 18"><text x="10" y="13.5" text-anchor="middle" font-family="Liberation Sans, sans-serif" font-weight="bold" font-size="13.5" fill="#f2bd2c" textLength="18.5" lengthAdjust="spacingAndGlyphs">{..}</text></svg></div><span class="abs tabt" style="left:38.5px;top:8px;letter-spacing:.300px">project.config.json</span><div class="abs" style="left:213.5px;top:10px;width:20px;height:18px"><svg width="18" height="18" viewBox="0 0 18 18"><rect x="1.5" y="1.5" width="15" height="15" fill="#f5c623"/><text x="15.2" y="14.6" text-anchor="end" font-family="Liberation Sans, sans-serif" font-weight="bold" font-size="9" fill="#3a3000">JS</text></svg></div><span class="abs tabt" style="left:238px;top:8px;color:#fff">index.js</span><svg class="abs" style="left:317.5px;top:12.5px" width="13" height="13" viewBox="0 0 13 13" stroke="#fff" stroke-width="1.500" fill="none"><path d="M1.500 1.500L11.500 11.500M11.500 1.500L1.500 11.500"/></svg><div class="abs" style="left:356px;top:10px;width:20px;height:18px"><svg width="20" height="18" viewBox="0 0 20 18"><text x="10" y="13.5" text-anchor="middle" font-family="Liberation Sans, sans-serif" font-weight="bold" font-size="13.5" fill="#f2bd2c" textLength="18.5" lengthAdjust="spacingAndGlyphs">{..}</text></svg></div><span class="abs tabt" style="left:383px;top:8px;font-style:italic">index.json</span><div class="abs" style="left:501.5px;top:10px;width:20px;height:18px"><svg width="18" height="18" viewBox="1.300 1.200 15.600 15.600"><path d="M3.5 2.5a1 1 0 0 1 1-1H10.5L14.8 5.8V15a1 1 0 0 1-1 1H4.5a1 1 0 0 1-1-1Z" fill="#8bc34a"/><path d="M10.3 1.7V6H14.6" fill="none" stroke="#2b2b2b" stroke-width=".9"/><path d="M7.6 9L5.8 10.9L7.6 12.8M10.6 9L12.4 10.9L10.6 12.8" fill="none" stroke="#22380f" stroke-width="1.3"/></svg></div><span class="abs tabt" style="left:527px;top:8px;letter-spacing:.270px">index.wxml</span><div class="abs" style="left:650.5px;top:10px;width:20px;height:18px"><svg width="18" height="18" viewBox="2.800 .800 13.600 17.300" preserveAspectRatio="none"><path d="M4.3 2.2H16l-.5 2.6H7.3l-.3 1.9h8.1l-1.3 6.9-5 1.9-4.6-1.9.5-2.7h2.6l-.2 1.1 2.1.8 2.3-.8.5-2.8H3.7l.9-4.7h8.200" fill="#42a5f5"/><path d="M4.3 2.2H16l-.5 2.6H3.8Z M3.4 6.7H15.1L14.600 9.300H2.900Z" fill="#42a5f5"/></svg></div><span class="abs tabt" style="left:677.5px;top:8px;">index.</span><svg class="abs" style="left:731px;top:11px" width="60" height="16" viewBox="0 0 60 16" fill="none" stroke="#d0d0d0" stroke-width="1.300"><rect x="1.500" y="1.500" width="13" height="13"/><path d="M8 1.500V14.500"/><g fill="#d0d0d0" stroke="none"><circle cx="40.500" cy="8" r="1.200"/><circle cx="46" cy="8" r="1.200"/><circle cx="51.500" cy="8" r="1.200"/></g></svg><div class="abs" style="left:0;top:37.500px;width:810px;height:26.500px;background:#323232"></div><svg class="abs" style="left:6px;top:41px" width="130" height="20" viewBox="0 0 130 20" fill="none" stroke="#b0b0b0" stroke-width="1.300">
<path d="M6.500 5H20M6.500 8.500H20M6.500 12H20M6.500 15.500H20M3 5H4.500M3 8.500H4.500M3 12H4.500M3 15.500H4.500"/>
<path d="M42.500 3.500H52.500V17L47.500 13L42.500 17Z"/>
<path d="M91.500 10H76.500M82 4.500L76.500 10L82 15.500"/>
<path d="M110.500 10H125.500M120 4.500L125.500 10L120 15.500" stroke="#555"/></svg><span class="abs bct" style="left:151.5px;top:40px;letter-spacing:.530px">miniprogram</span><svg class="abs" style="left:247.4px;top:45px" width="8" height="13" viewBox="0 0 8 13" fill="none" stroke="#8c8c8c" stroke-width="1.200"><path d="M1.300 1.300L6.500 6.500L1.300 11.700"/></svg><span class="abs bct" style="left:260.5px;top:40px;">pages</span><svg class="abs" style="left:307.7px;top:45px" width="8" height="13" viewBox="0 0 8 13" fill="none" stroke="#8c8c8c" stroke-width="1.200"><path d="M1.300 1.300L6.500 6.500L1.300 11.700"/></svg><span class="abs bct" style="left:320.5px;top:40px;">index</span><svg class="abs" style="left:364.0px;top:45px" width="8" height="13" viewBox="0 0 8 13" fill="none" stroke="#8c8c8c" stroke-width="1.200"><path d="M1.300 1.300L6.500 6.500L1.300 11.700"/></svg><div class="abs" style="left:379.5px;top:42px;width:20px;height:18px"><svg width="18" height="18" viewBox="0 0 18 18"><rect x="1.5" y="1.5" width="15" height="15" fill="#f5c623"/><text x="15.2" y="14.6" text-anchor="end" font-family="Liberation Sans, sans-serif" font-weight="bold" font-size="9" fill="#3a3000">JS</text></svg></div><span class="abs bct" style="left:404px;top:40px;color:#d8d8d8">index.js</span><svg class="abs" style="left:460.0px;top:45px" width="8" height="13" viewBox="0 0 8 13" fill="none" stroke="#8c8c8c" stroke-width="1.200"><path d="M1.300 1.300L6.500 6.500L1.300 11.700"/></svg><div class="abs" style="left:476px;top:42px;width:20px;height:18px"><svg width="18" height="18" viewBox="0 0 18 18" fill="none" stroke="#9d7fc4" stroke-width="1.2"><path d="M9 1.800L15.500 5.300V12.700L9 16.200L2.500 12.700V5.300ZM2.500 5.300L9 9L15.500 5.300M9 9V16.200"/></svg></div><span class="abs bct" style="left:500.5px;top:40px;">chaxun</span><svg class="abs" style="left:556.0px;top:45px" width="8" height="13" viewBox="0 0 8 13" fill="none" stroke="#8c8c8c" stroke-width="1.200"><path d="M1.300 1.300L6.500 6.500L1.300 11.700"/></svg><div class="abs" style="left:570px;top:42px;width:20px;height:18px"><svg width="18" height="18" viewBox="0 0 18 18" fill="none" stroke="#9d7fc4" stroke-width="1.2"><path d="M9 1.800L15.500 5.300V12.700L9 16.200L2.500 12.700V5.300ZM2.500 5.300L9 9L15.500 5.300M9 9V16.200"/></svg></div><span class="abs bct" style="left:595px;top:40px;letter-spacing:-.450px">success</span><svg class="abs" style="left:652.5px;top:45px" width="8" height="13" viewBox="0 0 8 13" fill="none" stroke="#8c8c8c" stroke-width="1.200"><path d="M1.300 1.300L6.500 6.500L1.300 11.700"/></svg><svg class="abs" style="left:667px;top:43px" width="20" height="16" viewBox="0 0 20 16" fill="none" stroke="#75beff" stroke-width="1.200"><path d="M4 2.500H1.500V13.500H4M15 2.500H17.500V13.500H15"/><circle cx="9.500" cy="8" r="3"/><path d="M7.500 8H11.500"/></svg><span class="abs bct" style="left:693px;top:40px;">arr</span><div id="code" class="abs" style="left:0;top:64px;width:810px;height:604px;overflow:hidden"><div class="abs" style="left:792px;top:0;width:18px;height:604px;background:#2e2e2e;border-left:1px solid #414141"></div><div class="abs" style="left:793px;top:252px;width:17px;height:1.500px;background:#a8a8a8"></div><div class="abs" style="left:797px;top:253.500px;width:8px;height:3px;background:#8a8a8a"></div><div class="abs" style="left:84px;top:0px;width:1px;height:604px;background:#444"></div><div class="abs" style="left:101px;top:0px;width:1px;height:94px;background:#4c4c4c"></div><div class="abs" style="left:101px;top:267px;width:1px;height:87px;background:#4c4c4c"></div><div class="abs" style="left:117px;top:267px;width:1px;height:87px;background:#4c4c4c"></div><div class="abs" style="left:134px;top:267px;width:1px;height:87px;background:#4c4c4c"></div><div class="abs" style="left:101px;top:383px;width:1px;height:221px;background:#4c4c4c"></div><div class="abs" style="left:117px;top:441px;width:1px;height:163px;background:#4c4c4c"></div><div class="abs" style="left:133px;top:557px;width:1px;height:47px;background:#4c4c4c"></div><div class="abs" style="left:149px;top:586px;width:1px;height:18px;background:#4c4c4c"></div><div class="abs" style="left:165px;top:586px;width:1px;height:18px;background:#4c4c4c"></div><div class="abs" style="left:101px;top:179.5px;width:1px;height:59.5px;background:#4c4c4c"></div><div class="ln" style="top:8.00px">9</div><div class="cl" style="left:116px;top:8.00px"><i class="w">banner:</i><i class="y">[]</i><i class="w">,</i></div><div class="ln" style="top:36.90px">10</div><div class="cl" style="left:116px;top:36.90px"><i class="w">num:</i><i class="s">''</i><i class="w">,</i></div><div class="ln" style="top:65.80px">11</div><div class="cl" style="left:116px;top:65.80px"><i class="w">steps:</i><i class="y">[]</i><i class="w">,</i></div><div class="ln" style="top:94.70px">12</div><div class="cl" style="left:100px;top:94.70px"><i class="b">}</i><i class="w">,</i></div><div class="ln" style="top:123.60px">13</div><div class="cl" style="left:100px;top:123.60px"></div><div class="ln" style="top:152.50px">14</div><svg class="abs" style="left:62px;top:157.80px" width="13" height="9" viewBox="0 0 13 9" fill="none" stroke="#c8c8c8" stroke-width="1.300"><path d="M1.500 1.500L6.500 6.500L11.500 1.500"/></svg><div class="cl" style="left:100px;top:152.50px"><i class="c">/**</i></div><div class="ln" style="top:181.40px">15</div><div class="cl" style="left:108px;top:181.40px"><i class="c">* <b class="k">生命周期函数</b>--<b class="k">监听页面加载</b></i></div><div class="ln" style="top:210.30px">16</div><div class="cl" style="left:108px;top:210.30px"><i class="c">*/</i></div><div class="ln" style="top:239.20px">17</div><svg class="abs" style="left:62px;top:244.50px" width="13" height="9" viewBox="0 0 13 9" fill="none" stroke="#c8c8c8" stroke-width="1.300"><path d="M1.500 1.500L6.500 6.500L11.500 1.500"/></svg><div class="cl" style="left:100px;top:239.20px"><i class="o">onLoad</i><i class="w">: </i><i class="f">function</i><i class="w"> </i><i class="b">(</i><i class="p">options</i><i class="b">)</i><i class="w"> </i><i class="b">{</i></div><div class="ln" style="top:268.10px">18</div><div class="cl" style="left:140px;top:268.10px"><i class="c">//<b class="k">一进入页面就获取轮播图数据</b></i></div><div class="ln" style="top:297.00px">19</div><div class="cl" style="left:140px;top:297.00px"><i class="c">//<b class="k">定义一个获取轮播图的</b>get_banner<b class="k">函数</b></i></div><div class="ln" style="top:325.90px">20</div><div class="cl" style="left:140px;top:325.90px"><i class="t">this</i><i class="w">.</i><i class="o">get_banner</i><i class="y">()</i></div><div class="ln" style="top:354.80px">21</div><div class="cl" style="left:100px;top:354.80px"><i class="b">}</i><i class="w">,</i></div><div class="ln" style="top:383.70px">22</div><div class="cl" style="left:116px;top:383.70px"><i class="c">//<b class="k">获取轮播图</b></i></div><div class="ln" style="top:412.60px">23</div><svg class="abs" style="left:62px;top:417.90px" width="13" height="9" viewBox="0 0 13 9" fill="none" stroke="#c8c8c8" stroke-width="1.300"><path d="M1.500 1.500L6.500 6.500L11.500 1.500"/></svg><div class="cl" style="left:116px;top:412.60px"><i class="o">get_banner</i><i class="b">(){</i></div><div class="ln" style="top:441.50px">24</div><svg class="abs" style="left:62px;top:446.80px" width="13" height="9" viewBox="0 0 13 9" fill="none" stroke="#c8c8c8" stroke-width="1.300"><path d="M1.500 1.500L6.500 6.500L11.500 1.500"/></svg><div class="cl" style="left:132px;top:441.50px"><i class="c">//<b class="k">这个</b>this<b class="k">指向的是</b>Page()<b class="k">方法里面的整个对象，形如</b>Page({this})</i></div><div class="ln" style="top:470.40px">25</div><div class="cl" style="left:132px;top:470.40px"><i class="c">//<b class="k">赋值给</b>that<b class="k">，</b>that<b class="k">也指向了同样的对象</b></i></div><div class="ln" style="top:499.30px">26</div><div class="cl" style="left:132px;top:499.30px"><i class="f">let</i><i class="w"> that = </i><i class="t">this</i></div><div class="ln" style="top:528.20px">27</div><svg class="abs" style="left:62px;top:533.50px" width="13" height="9" viewBox="0 0 13 9" fill="none" stroke="#c8c8c8" stroke-width="1.300"><path d="M1.500 1.500L6.500 6.500L11.500 1.500"/></svg><div class="cl" style="left:132px;top:528.20px"><i class="w">db.</i><i class="o">collection</i><i class="y">(</i><i class="s2">'banner'</i><i class="y">)</i><i class="w">.</i><i class="o">get</i><i class="y">(</i><i class="m">{</i></div><div class="ln" style="top:557.10px">28</div><svg class="abs" style="left:62px;top:562.40px" width="13" height="9" viewBox="0 0 13 9" fill="none" stroke="#c8c8c8" stroke-width="1.300"><path d="M1.500 1.500L6.500 6.500L11.500 1.500"/></svg><div class="cl" style="left:148px;top:557.10px"><i class="o">success</i><i class="w">:</i><i class="f">function</i><i class="b">(</i><i class="p">res</i><i class="b">)</i><i class="b">{</i></div><div class="ln" style="top:586.00px">29</div><div class="cl" style="left:172px;top:586.00px"><i class="c">//<b class="k">获取成功</b></i></div></div><svg class="abs" style="left:0;top:0;pointer-events:none" width="810" height="668" viewBox="702 110 810 668"><rect x="758.300" y="409.300" width="395.500" height="145" fill="none" stroke="#ea3f3c" stroke-width="2.600"/><path d="M995.500 524.700L1020 526L1021.500 530.500L1357.300 716.800L1014.500 540L1010 543.500Z" fill="#f23a3a"/></svg></div>
<div id="dbg"><div class="abs" style="left:0;top:-6px;width:810px;height:6px;background:linear-gradient(rgba(0,0,0,0),rgba(0,0,0,.28))"></div><span class="abs" style="left:23.5px;top:9px;line-height:20px;white-space:nowrap;font-size:13.300px;font-weight:bold;color:#fff">调试器</span><div class="abs" style="left:23.5px;top:33.5px;width:41px;height:1.500px;background:#e8e8e8"></div><div class="abs" style="left:74px;top:9px;width:21px;height:20px;border-radius:10px;background:#4b4b4b;color:#eee;font-size:13px;line-height:20px;text-align:center">3</div><span class="abs" style="left:118.5px;top:9px;line-height:20px;white-space:nowrap;font-size:13.300px;font-weight:bold;color:#8a8a8a">问题</span><span class="abs" style="left:169.5px;top:9px;line-height:20px;white-space:nowrap;font-size:13.300px;font-weight:bold;color:#8a8a8a">输出</span><span class="abs" style="left:219.5px;top:9px;line-height:20px;white-space:nowrap;font-size:13.300px;font-weight:bold;color:#8a8a8a">终端</span><svg class="abs" style="left:730px;top:12px" width="60" height="16" viewBox="0 0 60 16" fill="none" stroke="#d8d8d8" stroke-width="1.400"><path d="M3 11.500L9 5.500L15 11.500M42 3L53 14M53 3L42 14"/></svg><div class="abs" style="left:0;top:36px;width:810px;height:32px;background:#333;border-bottom:1px solid #454545"></div><div class="abs" style="left:115px;top:36px;width:78.500px;height:31.500px;background:#000"></div><svg class="abs" style="left:11px;top:43px" width="20" height="18" viewBox="0 0 20 18" fill="none" stroke="#9aa0a6" stroke-width="1.500"><path d="M15.500 6V2.500H2.500V14.500H7"/><path d="M9 7L17.500 10.500L13.800 11.800L16.500 15.500L14.800 16.500L12.300 12.800L9.800 15.500Z" fill="#9aa0a6" stroke="none"/></svg><div class="abs" style="left:42.5px;top:43px;width:1px;height:18px;background:#4a4a4a"></div><span class="abs" style="left:63.5px;top:41.5px;line-height:20px;white-space:nowrap;font-size:14.300px;color:#d5d5d5">Wxml</span><span class="abs" style="left:128.5px;top:41.5px;line-height:20px;white-space:nowrap;font-size:14.300px;color:#d5d5d5;color:#fff">Console</span><span class="abs" style="left:208px;top:41.5px;line-height:20px;white-space:nowrap;font-size:14.300px;color:#d5d5d5">Sources</span><span class="abs" style="left:286.5px;top:41.5px;line-height:20px;white-space:nowrap;font-size:14.300px;color:#d5d5d5">Network</span><span class="abs" style="left:369.5px;top:41.5px;line-height:20px;white-space:nowrap;font-size:14.300px;color:#d5d5d5">Memory</span><span class="abs" style="left:451px;top:41.5px;line-height:20px;white-space:nowrap;font-size:14.300px;color:#d5d5d5">AppData</span><span class="abs" style="left:535px;top:41.5px;line-height:20px;white-space:nowrap;font-size:14.300px;color:#d5d5d5">Storage</span><span class="abs" style="left:608px;top:40px;line-height:20px;white-space:nowrap;font-size:20px;color:#bbb">»</span><svg class="abs" style="left:661px;top:44px" width="15" height="14" viewBox="0 0 15 14"><path d="M7.500 1L14.300 13H.700Z" fill="#f4bd00"/><rect x="6.800" y="5" width="1.400" height="4.300" fill="#333"/><rect x="6.800" y="10.200" width="1.400" height="1.500" fill="#333"/></svg><span class="abs" style="left:679px;top:41.5px;line-height:20px;white-space:nowrap;font-size:14px;color:#d5d5d5">3</span><div class="abs" style="left:701px;top:42px;width:1px;height:19px;background:#4a4a4a"></div><svg class="abs" style="left:713px;top:42px" width="20" height="20" viewBox="0 0 20 20" fill="#9aa0a6"><path d="M10 6.700a3.300 3.300 0 1 0 0 6.600 3.300 3.300 0 0 0 0-6.600Zm8 4.500v-2.400l-2.100-.5a6.200 6.200 0 0 0-.7-1.600l1.100-1.800-1.700-1.700-1.800 1.100a6.200 6.200 0 0 0-1.600-.7L10.700 1.500H8.300l-.5 2.100a6.200 6.200 0 0 0-1.600.7L4.400 3.200 2.700 4.900l1.100 1.800a6.200 6.200 0 0 0-.7 1.600L1 8.800v2.400l2.100.5c.2.600.4 1.100.7 1.600l-1.100 1.800 1.700 1.700 1.800-1.100c.5.300 1 .5 1.600.7l.5 2.100h2.400l.5-2.100c.6-.2 1.100-.4 1.600-.7l1.800 1.100 1.700-1.700-1.100-1.800c.3-.5.500-1 .7-1.600Z" fill-rule="evenodd"/></svg><svg class="abs" style="left:752px;top:43px" width="8" height="18" viewBox="0 0 8 18" fill="#9aa0a6"><circle cx="4" cy="3" r="1.700"/><circle cx="4" cy="9" r="1.700"/><circle cx="4" cy="15" r="1.700"/></svg><svg class="abs" style="left:778px;top:42px" width="22" height="20" viewBox="0 0 22 20" fill="none" stroke="#9aa0a6" stroke-width="1.800"><rect x="6" y="3" width="14" height="10"/><path d="M3 7V17H16"/></svg><div class="abs" style="left:0;top:68.5px;width:810px;height:31.500px;background:#333;border-bottom:1px solid #454545"></div><svg class="abs" style="left:8px;top:75px" width="60" height="18" viewBox="0 0 60 18" fill="none" stroke="#9aa0a6" stroke-width="1.500"><rect x="2" y="2.500" width="17" height="13"/><path d="M6.500 2.500V15.500"/><path d="M10 5.800L14.500 9L10 12.200Z" fill="#9aa0a6" stroke="none"/><circle cx="46" cy="9" r="6.500"/><path d="M41.500 4.500L50.500 13.500"/></svg><span class="abs" style="left:86.5px;top:74px;line-height:20px;white-space:nowrap;font-size:14.300px;color:#d5d5d5">appservice (#1)</span><span class="abs" style="left:231px;top:74px;line-height:20px;white-space:nowrap;font-size:10px;color:#aaa">▼</span><div class="abs" style="left:251.5px;top:75px;width:1px;height:19px;background:#4a4a4a"></div><svg class="abs" style="left:264px;top:77px" width="22" height="14" viewBox="0 0 22 14"><path d="M1 7C4 1.500 18 1.500 21 7C18 12.500 4 12.500 1 7Z" fill="#9aa0a6"/><circle cx="11" cy="7" r="3.600" fill="#333"/><circle cx="11" cy="7" r="1.800" fill="#9aa0a6"/></svg><div class="abs" style="left:305.5px;top:71.5px;width:170px;height:24.500px;background:#282828;border:1px solid #5a5a5a"></div><span class="abs" style="left:310.5px;top:75px;line-height:20px;white-space:nowrap;font-size:14.300px;color:#d5d5d5;color:#b8b8b8">Filter</span><span class="abs" style="left:485.5px;top:74px;line-height:20px;white-space:nowrap;font-size:14.300px;color:#d5d5d5">Default levels</span><span class="abs" style="left:576px;top:74px;line-height:20px;white-space:nowrap;font-size:10px;color:#aaa">▼</span><div class="abs" style="left:698.5px;top:75px;width:1px;height:19px;background:#4a4a4a"></div><span class="abs" style="left:710.5px;top:74px;line-height:20px;white-space:nowrap;font-size:14.300px;color:#d5d5d5;color:#9a9a9a">4 hidden</span><svg class="abs" style="left:780px;top:74px" width="20" height="20" viewBox="0 0 20 20" fill="#9aa0a6"><path d="M10 6.700a3.300 3.300 0 1 0 0 6.600 3.300 3.300 0 0 0 0-6.600Zm8 4.500v-2.400l-2.100-.5a6.200 6.200 0 0 0-.7-1.600l1.100-1.800-1.700-1.700-1.800 1.100a6.200 6.200 0 0 0-1.600-.7L10.700 1.500H8.300l-.5 2.100a6.200 6.200 0 0 0-1.600.7L4.400 3.200 2.700 4.900l1.100 1.800a6.200 6.200 0 0 0-.7 1.600L1 8.800v2.400l2.100.5c.2.600.4 1.100.7 1.600l-1.100 1.800 1.700 1.700 1.800-1.100c.5.300 1 .5 1.600.7l.5 2.100h2.400l.5-2.100c.6-.2 1.100-.4 1.600-.7l1.800 1.100 1.700-1.700-1.100-1.800c.3-.5.500-1 .7-1.600Z" fill-rule="evenodd"/></svg><div class="abs" style="left:0;top:100px;width:793px;height:79px;background:#252525;overflow:hidden"><div class="abs" style="left:0;top:0;width:2px;height:79px;background:#3a3a3a"></div><span class="abs" style="left:46px;top:-11px;font-family:'Liberation Mono',monospace;font-size:13px;font-weight:bold;line-height:18px;color:#d8d8d8">.get()</span><div class="abs" style="left:18px;top:0;width:1px;height:10px;background:#4a4a4a"></div><div class="abs" style="left:0;top:10.800px;width:793px;height:24px;background:#372f00;border-top:1px solid #625700;border-bottom:1px solid #625700"></div><svg class="abs" style="left:24px;top:16px" width="15" height="14" viewBox="0 0 15 14"><path d="M7.500 .800L14.400 13H.600Z" fill="#f4bd00"/><rect x="6.800" y="4.800" width="1.400" height="4.400" fill="#372f00"/><rect x="6.800" y="10.200" width="1.400" height="1.500" fill="#372f00"/></svg><svg class="abs" style="left:47px;top:19px" width="8" height="10" viewBox="0 0 8 10"><path d="M1.500 .500L6.500 5L1.500 9.500Z" fill="#a0a0a0"/></svg><span class="abs" style="left:58.500px;top:13.800px;font-family:'Liberation Mono','Noto Sans CJK SC',monospace;font-size:13px;font-weight:bold;line-height:20px;color:#f1e8c0;white-space:nowrap;letter-spacing:.300px">1. <b class="wk">全量查询告警</b>: <b class="wk">空查询语句可能需扫全表</b></span><span class="abs" style="left:702px;top:14px;font-family:'Liberation Mono',monospace;font-size:13px;font-weight:bold;line-height:20px;color:#e8e2c8;text-decoration:underline;white-space:nowrap">VM146:8</span><svg class="abs" style="left:10px;top:41px" width="9" height="10" viewBox="0 0 9 10" fill="none" stroke="#3b82f6" stroke-width="1.800"><path d="M2 1L6.500 5L2 9"/></svg></div><div class="abs" style="left:793px;top:100px;width:17px;height:79px;background:#2c2c2c"></div><div class="abs" style="left:794px;top:154px;width:16px;height:25px;background:#3e3e3e"></div></div>
<div id="status"><span class="abs" style="left:10px;top:8px;font-size:13px;line-height:20px;color:#c0c0c0;white-space:nowrap">页面路径 <i style="font-style:normal;font-size:8px">▼</i></span><i class="abs" style="left:89px;top:10px;width:1px;height:14px;background:#555"></i><span class="abs" style="left:100px;top:8px;font-size:14.200px;line-height:20px;color:#b0b0b0;white-space:nowrap">pages/index/index</span><svg class="abs" style="left:230px;top:11px" width="18" height="14" viewBox="0 0 18 14" fill="none" stroke="#aaa" stroke-width="1.200"><rect x="2" y="3" width="10" height="10"/><path d="M5 3V1H15V11H12"/></svg><svg class="abs" style="left:362px;top:13px" width="60" height="14" viewBox="0 0 60 14" fill="none" stroke="#888" stroke-width="1.200"><ellipse cx="12" cy="9" rx="9" ry="6"/><g fill="#aaa" stroke="none"><circle cx="44" cy="8" r="1.100"/><circle cx="49.500" cy="8" r="1.100"/><circle cx="55" cy="8" r="1.100"/></g></svg><svg class="abs" style="left:452px;top:11px" width="16" height="16" viewBox="0 0 16 16" fill="none" stroke="#c8c8c8" stroke-width="1.100"><circle cx="8" cy="8" r="6.500"/><path d="M5.500 5.500L10.500 10.500M10.500 5.500L5.500 10.500"/></svg><span class="abs" style="left:473px;top:9px;font-size:12.500px;line-height:20px;color:#c8c8c8">0</span><svg class="abs" style="left:486px;top:11px" width="16" height="16" viewBox="0 0 16 16" fill="none" stroke="#c8c8c8" stroke-width="1.100"><path d="M8 1.500L14.800 14H1.200Z"/><path d="M8 6V10M8 11.500V12.500"/></svg><span class="abs" style="left:506px;top:9px;font-size:12.500px;line-height:20px;color:#c8c8c8">0</span><span class="abs" style="left:1183px;top:9px;font-size:13px;line-height:20px;color:#b8b8b8;white-space:nowrap">行 65，<span style="margin-left:2.500px">列 21</span></span><span class="abs" style="left:1285px;top:9px;font-size:13px;line-height:20px;color:#b8b8b8;white-space:nowrap">空格: 2</span></div>
<div id="taskbar"><div class="abs" style="left:48px;top:0;width:413px;height:15px;background:#f3f3f3"></div><div class="abs" style="left:598px;top:10.500px;width:24px;height:24px;border-radius:12px;background:#1e90ff"></div><div class="abs" style="left:654px;top:12px;width:22px;height:22px;border-radius:11px;background:#2fd05a"></div><div class="abs" style="left:700.500px;top:0;width:53.500px;height:15px;background:#4b4b4d"></div><div class="abs" style="left:754px;top:0;width:2.500px;height:15px;background:#38383a"></div><div class="abs" style="left:718px;top:10px;width:22px;height:22px;border-radius:11px;background:conic-gradient(from -70deg,#e9dcc0 0 40deg,#6a7fc0 40deg 70deg,#f4f4f8 70deg 100deg,#c8306a 100deg 150deg,#e9dcc0 150deg 360deg)"></div><div class="abs" style="left:756.500px;top:0;width:756px;height:15px;background:linear-gradient(90deg,#201c1c,#2c221d 30%,#251f1c 70%,#1c1b1b)"></div><div class="abs" style="left:776px;top:10.500px;width:26px;height:26px;border-radius:13px;background:#f4f4f4"></div></div>
<span class="abs" style="left:1323px;top:941px;font-size:18px;line-height:26px;color:rgba(170,170,170,.75);white-space:nowrap;letter-spacing:.100px">@稀土掘金技术社区</span><span class="abs" style="left:1335px;top:959px;font-size:18px;line-height:26px;color:#f2f2f2;white-space:nowrap;text-shadow:0 0 2px rgba(0,0,0,.8)">CSDN @mini小秃僧</span>
</body>
</html>
